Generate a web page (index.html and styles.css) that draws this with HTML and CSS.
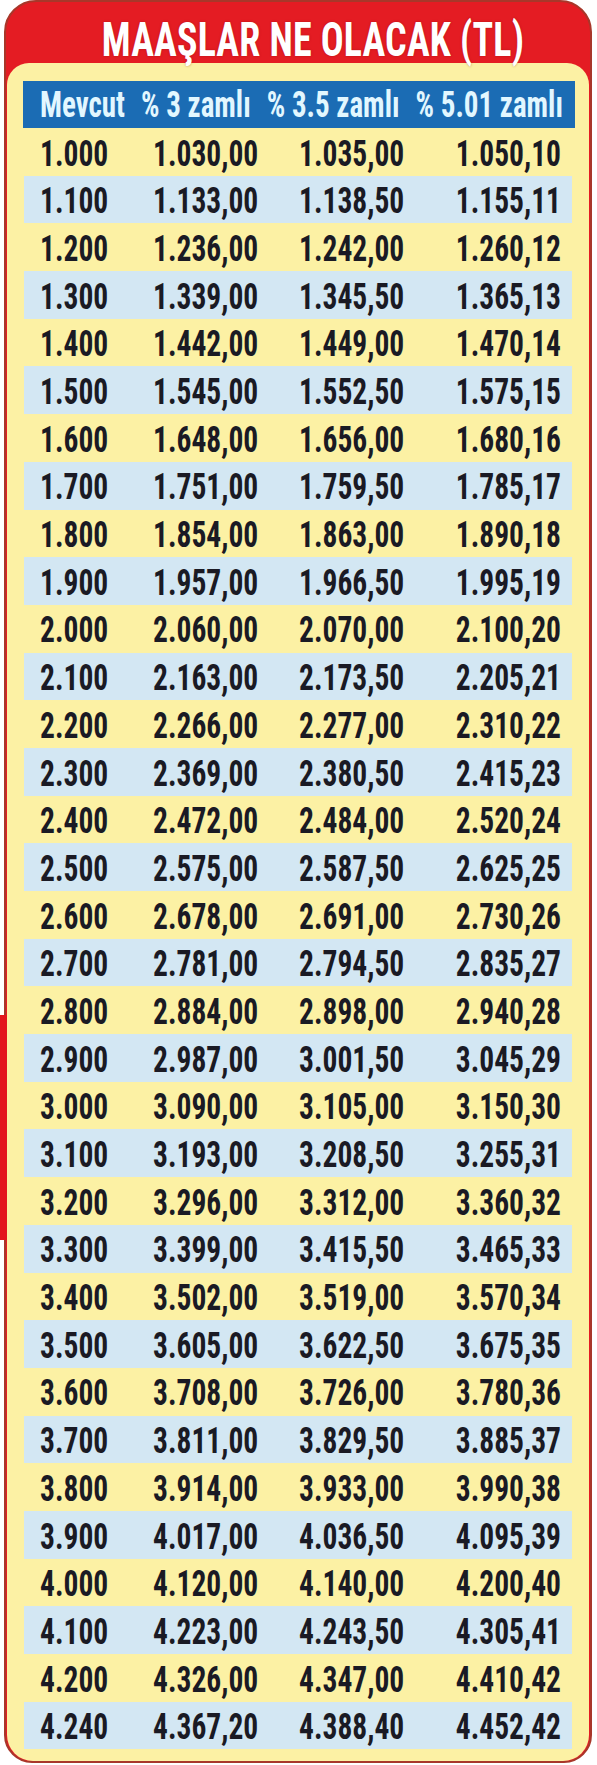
FILE: index.html
```html
<!DOCTYPE html>
<html lang="tr">
<head>
<meta charset="utf-8">
<title>Maaşlar ne olacak</title>
<link rel="stylesheet" href="styles.css">
</head>
<body>
<div class="edge-strip"></div>
<div class="card">
  <h1 class="title"><span class="tall">MAAŞLAR NE OLACAK (TL)</span></h1>
  <div class="panel">
    <div class="thead">
      <span class="tall">Mevcut</span>
      <span class="tall">% 3 zamlı</span>
      <span class="tall">% 3.5 zamlı</span>
      <span class="tall">% 5.01 zamlı</span>
    </div>
    <div class="rows">
      <div class="row"><span class="c">1.000</span><span class="c">1.030,00</span><span class="c">1.035,00</span><span class="c r">1.050,10</span></div>
      <div class="row"><span class="c">1.100</span><span class="c">1.133,00</span><span class="c">1.138,50</span><span class="c r">1.155,11</span></div>
      <div class="row"><span class="c">1.200</span><span class="c">1.236,00</span><span class="c">1.242,00</span><span class="c r">1.260,12</span></div>
      <div class="row"><span class="c">1.300</span><span class="c">1.339,00</span><span class="c">1.345,50</span><span class="c r">1.365,13</span></div>
      <div class="row"><span class="c">1.400</span><span class="c">1.442,00</span><span class="c">1.449,00</span><span class="c r">1.470,14</span></div>
      <div class="row"><span class="c">1.500</span><span class="c">1.545,00</span><span class="c">1.552,50</span><span class="c r">1.575,15</span></div>
      <div class="row"><span class="c">1.600</span><span class="c">1.648,00</span><span class="c">1.656,00</span><span class="c r">1.680,16</span></div>
      <div class="row"><span class="c">1.700</span><span class="c">1.751,00</span><span class="c">1.759,50</span><span class="c r">1.785,17</span></div>
      <div class="row"><span class="c">1.800</span><span class="c">1.854,00</span><span class="c">1.863,00</span><span class="c r">1.890,18</span></div>
      <div class="row"><span class="c">1.900</span><span class="c">1.957,00</span><span class="c">1.966,50</span><span class="c r">1.995,19</span></div>
      <div class="row"><span class="c">2.000</span><span class="c">2.060,00</span><span class="c">2.070,00</span><span class="c r">2.100,20</span></div>
      <div class="row"><span class="c">2.100</span><span class="c">2.163,00</span><span class="c">2.173,50</span><span class="c r">2.205,21</span></div>
      <div class="row"><span class="c">2.200</span><span class="c">2.266,00</span><span class="c">2.277,00</span><span class="c r">2.310,22</span></div>
      <div class="row"><span class="c">2.300</span><span class="c">2.369,00</span><span class="c">2.380,50</span><span class="c r">2.415,23</span></div>
      <div class="row"><span class="c">2.400</span><span class="c">2.472,00</span><span class="c">2.484,00</span><span class="c r">2.520,24</span></div>
      <div class="row"><span class="c">2.500</span><span class="c">2.575,00</span><span class="c">2.587,50</span><span class="c r">2.625,25</span></div>
      <div class="row"><span class="c">2.600</span><span class="c">2.678,00</span><span class="c">2.691,00</span><span class="c r">2.730,26</span></div>
      <div class="row"><span class="c">2.700</span><span class="c">2.781,00</span><span class="c">2.794,50</span><span class="c r">2.835,27</span></div>
      <div class="row"><span class="c">2.800</span><span class="c">2.884,00</span><span class="c">2.898,00</span><span class="c r">2.940,28</span></div>
      <div class="row"><span class="c">2.900</span><span class="c">2.987,00</span><span class="c">3.001,50</span><span class="c r">3.045,29</span></div>
      <div class="row"><span class="c">3.000</span><span class="c">3.090,00</span><span class="c">3.105,00</span><span class="c r">3.150,30</span></div>
      <div class="row"><span class="c">3.100</span><span class="c">3.193,00</span><span class="c">3.208,50</span><span class="c r">3.255,31</span></div>
      <div class="row"><span class="c">3.200</span><span class="c">3.296,00</span><span class="c">3.312,00</span><span class="c r">3.360,32</span></div>
      <div class="row"><span class="c">3.300</span><span class="c">3.399,00</span><span class="c">3.415,50</span><span class="c r">3.465,33</span></div>
      <div class="row"><span class="c">3.400</span><span class="c">3.502,00</span><span class="c">3.519,00</span><span class="c r">3.570,34</span></div>
      <div class="row"><span class="c">3.500</span><span class="c">3.605,00</span><span class="c">3.622,50</span><span class="c r">3.675,35</span></div>
      <div class="row"><span class="c">3.600</span><span class="c">3.708,00</span><span class="c">3.726,00</span><span class="c r">3.780,36</span></div>
      <div class="row"><span class="c">3.700</span><span class="c">3.811,00</span><span class="c">3.829,50</span><span class="c r">3.885,37</span></div>
      <div class="row"><span class="c">3.800</span><span class="c">3.914,00</span><span class="c">3.933,00</span><span class="c r">3.990,38</span></div>
      <div class="row"><span class="c">3.900</span><span class="c">4.017,00</span><span class="c">4.036,50</span><span class="c r">4.095,39</span></div>
      <div class="row"><span class="c">4.000</span><span class="c">4.120,00</span><span class="c">4.140,00</span><span class="c r">4.200,40</span></div>
      <div class="row"><span class="c">4.100</span><span class="c">4.223,00</span><span class="c">4.243,50</span><span class="c r">4.305,41</span></div>
      <div class="row"><span class="c">4.200</span><span class="c">4.326,00</span><span class="c">4.347,00</span><span class="c r">4.410,42</span></div>
      <div class="row"><span class="c">4.240</span><span class="c">4.367,20</span><span class="c">4.388,40</span><span class="c r">4.452,42</span></div>
    </div>
  </div>
</div>
</body>
</html>
```
FILE: styles.css
```css
html, body {
  margin: 0;
  padding: 0;
  background: #ffffff;
}

body {
  font-family: "Roboto Condensed", "Open Sans Condensed", "Liberation Sans", sans-serif;
  font-weight: 700;
  width: 597px;
  height: 1765px;
  overflow: hidden;
}

.edge-strip {
  position: absolute;
  left: 0;
  top: 1015px;
  width: 7px;
  height: 225px;
  background: #e3161d;
}

.card {
  box-sizing: border-box;
  margin-left: 4px;
  width: 588px;
  height: 1763px;
  border: 2px solid #a8372a;
  border-radius: 32px 32px 28px 28px;
  background: #e41c23;
  padding: 0 1px;
  display: flex;
  flex-direction: column;
}

.tall {
  display: inline-block;
  transform: scaleY(1.28);
}

.title {
  box-sizing: border-box;
  margin: 0;
  height: 61px;
  padding: 12px 0 0 30px;
  display: flex;
  align-items: center;
  justify-content: center;
  color: #ffffff;
  font-size: 38px;
  font-weight: 700;
  line-height: 1;
  letter-spacing: 0.2px;
  text-shadow: 0 0 2px rgba(120, 0, 0, 0.45);
}

.title .tall {
  transform: scaleY(1.28);
}

.panel {
  flex: 1;
  box-sizing: border-box;
  background: #fcf1a4;
  border-radius: 22px 22px 26px 26px;
  padding: 18px 14px 0 16px;
}

.thead {
  box-sizing: border-box;
  height: 47px;
  background: #1b6cb4;
  display: flex;
  align-items: center;
  justify-content: space-between;
  padding: 0 12px 0 17px;
  color: #e2f7ff;
  font-size: 29px;
  line-height: 1;
}

.rows {
  margin: 0 3px 0 1px;
}

.row {
  box-sizing: border-box;
  height: 47.7px;
  display: grid;
  grid-template-columns: 113px 146px 1fr 1fr;
  align-items: center;
  padding: 5px 11px 0 16px;
  color: #1a1a24;
  font-size: 29.5px;
  line-height: 1;
}

.row:nth-child(even) {
  background: #d3e7f3;
}

.c {
  display: block;
  transform: scaleY(1.24);
}

.r {
  text-align: right;
}
```
